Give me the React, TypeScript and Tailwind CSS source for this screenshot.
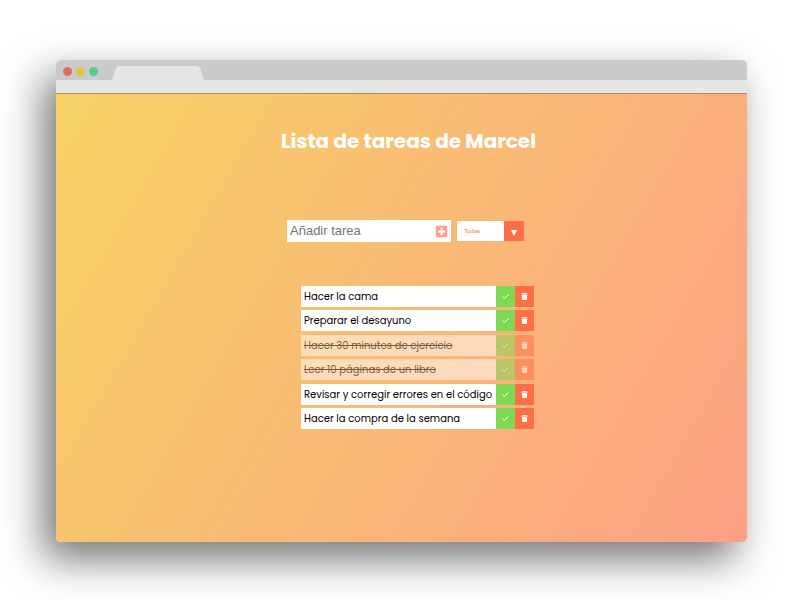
import { useState } from "react";
import type { FormEvent } from "react";
import { FaPlusSquare, FaTrash } from "react-icons/fa";

type Task = {
	id: number;
	text: string;
	completed: boolean;
};

const initialTasks: Task[] = [
	{ id: 1, text: "Hacer la cama", completed: false },
	{ id: 2, text: "Preparar el desayuno", completed: false },
	{ id: 3, text: "Hacer 30 minutos de ejercicio", completed: true },
	{ id: 4, text: "Leer 10 páginas de un libro", completed: true },
	{ id: 5, text: "Revisar y corregir errores en el código", completed: false },
	{ id: 6, text: "Hacer la compra de la semana", completed: false },
];

function BrowserBar() {
	return (
		<div>
			<div className="flex h-5 items-end bg-[#cbcbcb] pl-[7px]">
				<div className="flex gap-1 pb-1">
					<span className="size-[9px] rounded-full bg-[#e16d62]" />
					<span className="size-[9px] rounded-full bg-[#e3c343]" />
					<span className="size-[9px] rounded-full bg-[#59ca87]" />
				</div>
				<svg
					viewBox="0 0 92 14"
					className="ml-[14px] h-[14px] w-[92px]"
					fill="#e6e6e6"
					aria-hidden="true"
				>
					<path d="M0 14 L4 2 Q5 0 7 0 H85 Q87 0 88 2 L92 14 Z" />
				</svg>
			</div>
			<div className="h-[14px] border-b border-[#b58a55] bg-[#e6e6e6]" />
		</div>
	);
}

function TaskRow({
	task,
	onToggle,
	onDelete,
}: {
	task: Task;
	onToggle: () => void;
	onDelete: () => void;
}) {
	return (
		<li className={`flex h-[21px] ${task.completed ? "opacity-50" : ""}`}>
			<span
				className={`flex-1 whitespace-nowrap bg-white pl-[3px] text-[10px] leading-[21px] text-black ${
					task.completed ? "line-through" : ""
				}`}
			>
				{task.text}
			</span>
			<button
				type="button"
				aria-label="Completar"
				className="flex w-[19px] items-center justify-center bg-[#7ed957] text-white"
				onClick={onToggle}
			>
				<svg
					viewBox="0 0 7 7"
					className="size-[7px]"
					fill="none"
					stroke="currentColor"
					aria-hidden="true"
				>
					<path d="M0.5 3.6 L2.4 5.5 L6.5 1.4" />
				</svg>
			</button>
			<button
				type="button"
				aria-label="Eliminar"
				className="flex w-[19px] items-center justify-center bg-[#ff6f47] text-white"
				onClick={onDelete}
			>
				<FaTrash className="size-[7px]" />
			</button>
		</li>
	);
}

export default function App() {
	const [tasks, setTasks] = useState(initialTasks);
	const [text, setText] = useState("");
	const [filter, setFilter] = useState("all");

	const visible = tasks.filter(
		(task) =>
			filter === "all" || (filter === "completed") === task.completed,
	);

	function addTask(e: FormEvent) {
		e.preventDefault();
		if (!text.trim()) return;
		setTasks([...tasks, { id: Date.now(), text, completed: false }]);
		setText("");
	}

	return (
		<div className="flex min-h-screen flex-col bg-white pt-[60px] pr-[53px] pb-[58px] pl-14 font-['Poppins','Inter',sans-serif]">
			<div className="flex flex-1 flex-col overflow-hidden rounded-[5px] shadow-[-12px_17px_40px_rgba(0,0,0,0.55)]">
				<BrowserBar />
				<main className="flex flex-1 flex-col items-center bg-[linear-gradient(120deg,#f6d365_0%,#fda085_100%)] pl-[14px]">
					<h1 className="mt-[31px] text-xl leading-8 font-bold text-white">
						Lista de tareas de Marcel
					</h1>

					<form
						className="mt-[63px] mr-[6px] flex items-center gap-[6px]"
						onSubmit={addTask}
					>
						<div className="flex h-[22px] w-[164px] items-center bg-white px-[3px]">
							<input
								type="text"
								aria-label="Añadir tarea"
								placeholder="Añadir tarea"
								value={text}
								onChange={(e) => setText(e.target.value)}
								className="min-w-0 flex-1 font-['Liberation_Sans',Arial,sans-serif] text-[13px] leading-5 text-black outline-none placeholder:text-[#757575]"
							/>
							<button
								type="submit"
								aria-label="Añadir"
								className="text-[#ff9f89]"
							>
								<FaPlusSquare className="size-[13px]" />
							</button>
						</div>
						<div className="relative h-5 w-[67px]">
							<select
								aria-label="Filtrar tareas"
								value={filter}
								onChange={(e) => setFilter(e.target.value)}
								className="block size-full appearance-none bg-white pl-[7px] font-['Liberation_Sans',Arial,sans-serif] text-[6px] text-[#ff6f47] outline-none"
							>
								<option value="all">Todas</option>
								<option value="completed">Completadas</option>
								<option value="uncompleted">Pendientes</option>
							</select>
							<span className="pointer-events-none absolute inset-y-0 right-0 flex w-5 items-center justify-center bg-[#ff6f47]">
								<svg
									viewBox="0 0 6 6"
									className="mt-[3px] size-[6px]"
									fill="#fff"
									aria-hidden="true"
								>
									<path d="M0 0 H6 L3 6 Z" />
								</svg>
							</span>
						</div>
					</form>

					<ul className="mt-11 ml-[18px] flex h-[143px] w-[233px] flex-col justify-between">
						{visible.map((task) => (
							<TaskRow
								key={task.id}
								task={task}
								onToggle={() =>
									setTasks(
										tasks.map((t) =>
											t.id === task.id
												? { ...t, completed: !t.completed }
												: t,
										),
									)
								}
								onDelete={() =>
									setTasks(tasks.filter((t) => t.id !== task.id))
								}
							/>
						))}
					</ul>
				</main>
			</div>
		</div>
	);
}
